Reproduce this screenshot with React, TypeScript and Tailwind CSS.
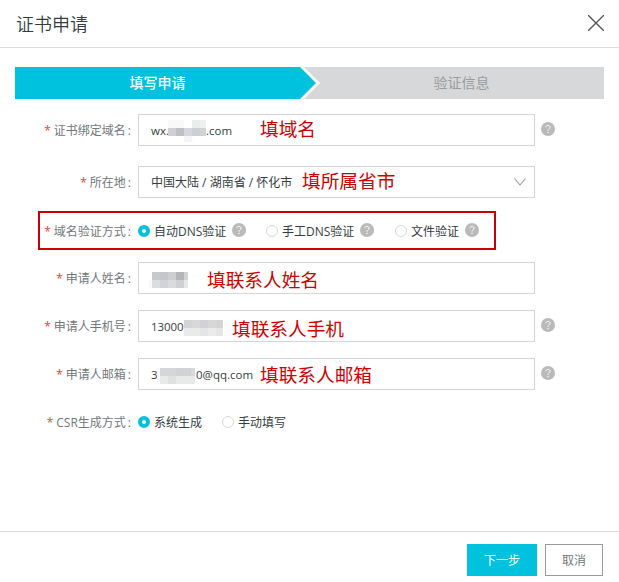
import React from 'react';

interface Block {
  x: number;
  y: number;
  w: number;
  h: number;
  color: string;
}

interface FieldRowProps {
  label: string;
  children: React.ReactNode;
  className?: string;
}

const domainBlocks: Block[] = [
  { x: 0, y: 0, w: 16, h: 8, color: '#f9f9f9' },
  { x: 24, y: 0, w: 8, h: 8, color: '#e9edec' },
  { x: 32, y: 0, w: 6, h: 8, color: '#eff1f1' },
  { x: 0, y: 8, w: 8, h: 8, color: '#cfd0d2' },
  { x: 8, y: 8, w: 8, h: 8, color: '#bfc0c3' },
  { x: 16, y: 8, w: 8, h: 8, color: '#d6d7dc' },
  { x: 24, y: 8, w: 8, h: 8, color: '#cecfd2' },
  { x: 32, y: 8, w: 6, h: 8, color: '#d2d3d5' },
  { x: 16, y: 16, w: 8, h: 6, color: '#f4f5f5' },
];

const nameBlocks: Block[] = [
  { x: 0, y: 8, w: 3, h: 8, color: '#f8f8f8' },
  { x: 3, y: 0, w: 8, h: 8, color: '#c8c9cb' },
  { x: 11, y: 0, w: 8, h: 8, color: '#c5c6c9' },
  { x: 19, y: 0, w: 8, h: 8, color: '#cdced0' },
  { x: 27, y: 0, w: 8, h: 8, color: '#b4b5b8' },
  { x: 35, y: 0, w: 4, h: 8, color: '#d2d3d4' },
  { x: 3, y: 8, w: 8, h: 8, color: '#dcdddf' },
  { x: 11, y: 8, w: 8, h: 8, color: '#d2d3d6' },
  { x: 19, y: 8, w: 8, h: 8, color: '#dadbdd' },
  { x: 27, y: 8, w: 8, h: 8, color: '#cfd0d3' },
  { x: 35, y: 8, w: 4, h: 8, color: '#e6e7e8' },
];

const phoneBlocks: Block[] = [
  { x: 0, y: 0, w: 8, h: 8, color: '#d3d4d5' },
  { x: 8, y: 0, w: 8, h: 8, color: '#d8d8d9' },
  { x: 16, y: 0, w: 8, h: 8, color: '#d2d2d4' },
  { x: 24, y: 0, w: 8, h: 8, color: '#d7d7d8' },
  { x: 32, y: 0, w: 7, h: 8, color: '#d4d4d5' },
  { x: 0, y: 8, w: 16, h: 8, color: '#e9eaea' },
  { x: 16, y: 8, w: 8, h: 8, color: '#e4e5e5' },
  { x: 24, y: 8, w: 8, h: 8, color: '#eaebea' },
  { x: 32, y: 8, w: 7, h: 8, color: '#e4e5e5' },
];

const emailBlocks: Block[] = [
  { x: 0, y: 0, w: 3, h: 16, color: '#f9f9f9' },
  { x: 3, y: 0, w: 16, h: 8, color: '#d5d6d7' },
  { x: 19, y: 0, w: 15, h: 8, color: '#d1d2d4' },
  { x: 34, y: 0, w: 4, h: 8, color: '#d8d9da' },
  { x: 3, y: 8, w: 8, h: 8, color: '#e8eaea' },
  { x: 11, y: 8, w: 8, h: 8, color: '#dfe1e1' },
  { x: 19, y: 8, w: 19, h: 8, color: '#e8e9e9' },
];

// Pixelated patch that hides private characters
const Mosaic = ({ blocks, width, height }: { blocks: Block[]; width: number; height: number }) => (
  <svg width={width} height={height} className="shrink-0" shapeRendering="crispEdges">
    {blocks.map((b, i) => (
      <rect key={i} x={b.x} y={b.y} width={b.w} height={b.h} fill={b.color} />
    ))}
  </svg>
);

const HelpIcon = () => (
  <svg width="14" height="14" viewBox="0 0 14 14" className="mb-0.5 shrink-0">
    <circle cx="7" cy="7" r="7" fill="#bababa" />
    <path
      d="M4.9 5.2C4.9 2.8 9.1 2.8 9.1 5.2C9.1 6.7 7 6.7 7 8.7"
      fill="none"
      stroke="#fff"
      strokeWidth="1"
    />
    <circle cx="7" cy="10.5" r=".65" fill="#fff" />
  </svg>
);

const FieldRow: React.FC<FieldRowProps> = ({ label, children, className = '' }) => (
  <div className={`flex h-8 items-center ${className}`}>
    <div className="flex w-[131px] shrink-0 items-center justify-end pt-0.5 whitespace-nowrap text-[#73777a]">
      <span className="mr-[3px] text-[#f04134]">*</span>
      <span>{label}</span>
      <span className="ml-0.5">:</span>
    </div>
    <div className="ml-[7px] flex items-center">{children}</div>
  </div>
);

const Field = ({ children }: { children?: React.ReactNode }) => (
  <div className="relative flex h-8 w-[397px] items-center border border-[#d5d6d8] pt-0.5 pl-3 whitespace-nowrap text-[#373d41]">
    {children}
  </div>
);

const Note = ({ children, className }: { children: React.ReactNode; className: string }) => (
  <span className={`absolute text-[18.67px] leading-6 whitespace-nowrap text-[#cc0000] ${className}`}>
    {children}
  </span>
);

const Radio = ({ label, checked = false }: { label: string; checked?: boolean }) => (
  <label className="flex items-center whitespace-nowrap text-[#373d41]">
    <span
      className={`mr-1 h-3 w-3 rounded-full bg-white ${
        checked ? 'border-4 border-[#00c1de]' : 'border border-[#d7d8d9]'
      }`}
    />
    <span className="pt-0.5">{label}</span>
  </label>
);

const App: React.FC = () => {
  return (
    <div className="flex h-[582px] w-[619px] flex-col overflow-hidden bg-white font-['Open_Sans','Noto_Sans_CJK_SC',sans-serif] text-xs font-normal">
      {/* Header */}
      <div className="flex h-12 shrink-0 items-center justify-between border-b border-[#dddddd] pr-[15px] pl-4">
        <h1 className="text-lg leading-6 font-[350] text-[#373d41]">证书申请</h1>
        <svg width="16" height="16" viewBox="0 0 16 16" className="mb-0.5" stroke="#55595c" strokeWidth="1.4">
          <path d="M0 0L16 16M16 0L0 16" />
        </svg>
      </div>

      {/* Steps */}
      <div className="relative mx-[15px] mt-[19px] flex h-8 shrink-0 text-sm leading-8">
        <div className="w-[285px] bg-[#00c1de] text-center font-medium text-white">填写申请</div>
        <div className="flex-1 bg-[#d7d8d9] pl-[19px] text-center text-[#999b9d]">验证信息</div>
        <svg width="21" height="32" className="absolute top-0 left-[285px]">
          <path d="M0 0H4L20 16L4 32H0Z" fill="#fff" />
          <path d="M0 0L16 16L0 32Z" fill="#00c1de" />
        </svg>
      </div>

      {/* Form */}
      <div className="mt-[15px] flex flex-1 flex-col gap-4">
        <FieldRow label="证书绑定域名" className="mb-1">
          <Field>
            <span className="w-[17px] text-[11.5px]">wx.</span>
            <Mosaic blocks={domainBlocks} width={38} height={22} />
            <span className="text-[11.5px]">.com</span>
            <Note className="top-0.5 left-[121px]">填域名</Note>
          </Field>
          <span className="ml-1.5">
            <HelpIcon />
          </span>
        </FieldRow>

        <FieldRow label="所在地">
          <Field>
            <span>中国大陆 / 湖南省 / 怀化市</span>
            <Note className="top-0.5 left-[163px]">填所属省市</Note>
            <svg
              width="12"
              height="8"
              viewBox="0 0 12 8"
              className="absolute top-[11px] right-2"
              fill="none"
              stroke="#999"
              strokeWidth="1.1"
            >
              <path d="M.5 .5L6 7L11.5 .5" />
            </svg>
          </Field>
        </FieldRow>

        <div className="relative">
          <FieldRow label="域名验证方式" className="pt-0.5">
            <div className="flex w-[128px] items-center gap-1.5">
              <Radio label="自动DNS验证" checked />
              <HelpIcon />
            </div>
            <div className="flex w-[129px] items-center gap-1.5">
              <Radio label="手工DNS验证" />
              <HelpIcon />
            </div>
            <div className="flex items-center gap-1.5">
              <Radio label="文件验证" />
              <HelpIcon />
            </div>
          </FieldRow>
          <div className="absolute -top-[3px] left-[38px] h-[39px] w-[458px] border-2 border-[#c80000]" />
        </div>

        <FieldRow label="申请人姓名">
          <Field>
            <div className="-ml-[2px] pt-0.5">
              <Mosaic blocks={nameBlocks} width={39} height={16} />
            </div>
            <Note className="top-[5px] left-[68px]">填联系人姓名</Note>
          </Field>
        </FieldRow>

        <FieldRow label="申请人手机号">
          <Field>
            <span className="w-[33px] text-[11.5px] tracking-[-0.1px]">13000</span>
            <div className="pt-0.5">
              <Mosaic blocks={phoneBlocks} width={39} height={16} />
            </div>
            <Note className="top-1.5 left-[93px]">填联系人手机</Note>
          </Field>
          <span className="ml-1.5">
            <HelpIcon />
          </span>
        </FieldRow>

        <FieldRow label="申请人邮箱">
          <Field>
            <span className="w-1.5 text-[11.5px]">3</span>
            <div className="pt-0.5">
              <Mosaic blocks={emailBlocks} width={38} height={16} />
            </div>
            <span className="ml-px text-[11.5px]">0@qq.com</span>
            <Note className="top-1 left-[121px]">填联系人邮箱</Note>
          </Field>
          <span className="ml-1.5">
            <HelpIcon />
          </span>
        </FieldRow>

        <FieldRow label="CSR生成方式">
          <div className="flex w-[84px]">
            <Radio label="系统生成" checked />
          </div>
          <Radio label="手动填写" />
        </FieldRow>
      </div>

      {/* Footer */}
      <div className="flex h-[51px] shrink-0 justify-end gap-2 border-t border-[#dddddd] pt-3 pr-4">
        <button className="h-8 w-[70px] bg-[#00c1de] pt-0.5 text-white">下一步</button>
        <button className="h-8 w-[58px] border border-[#999b9d] bg-white pt-0.5 text-[#73777a]">取消</button>
      </div>
    </div>
  );
};

export default App;
